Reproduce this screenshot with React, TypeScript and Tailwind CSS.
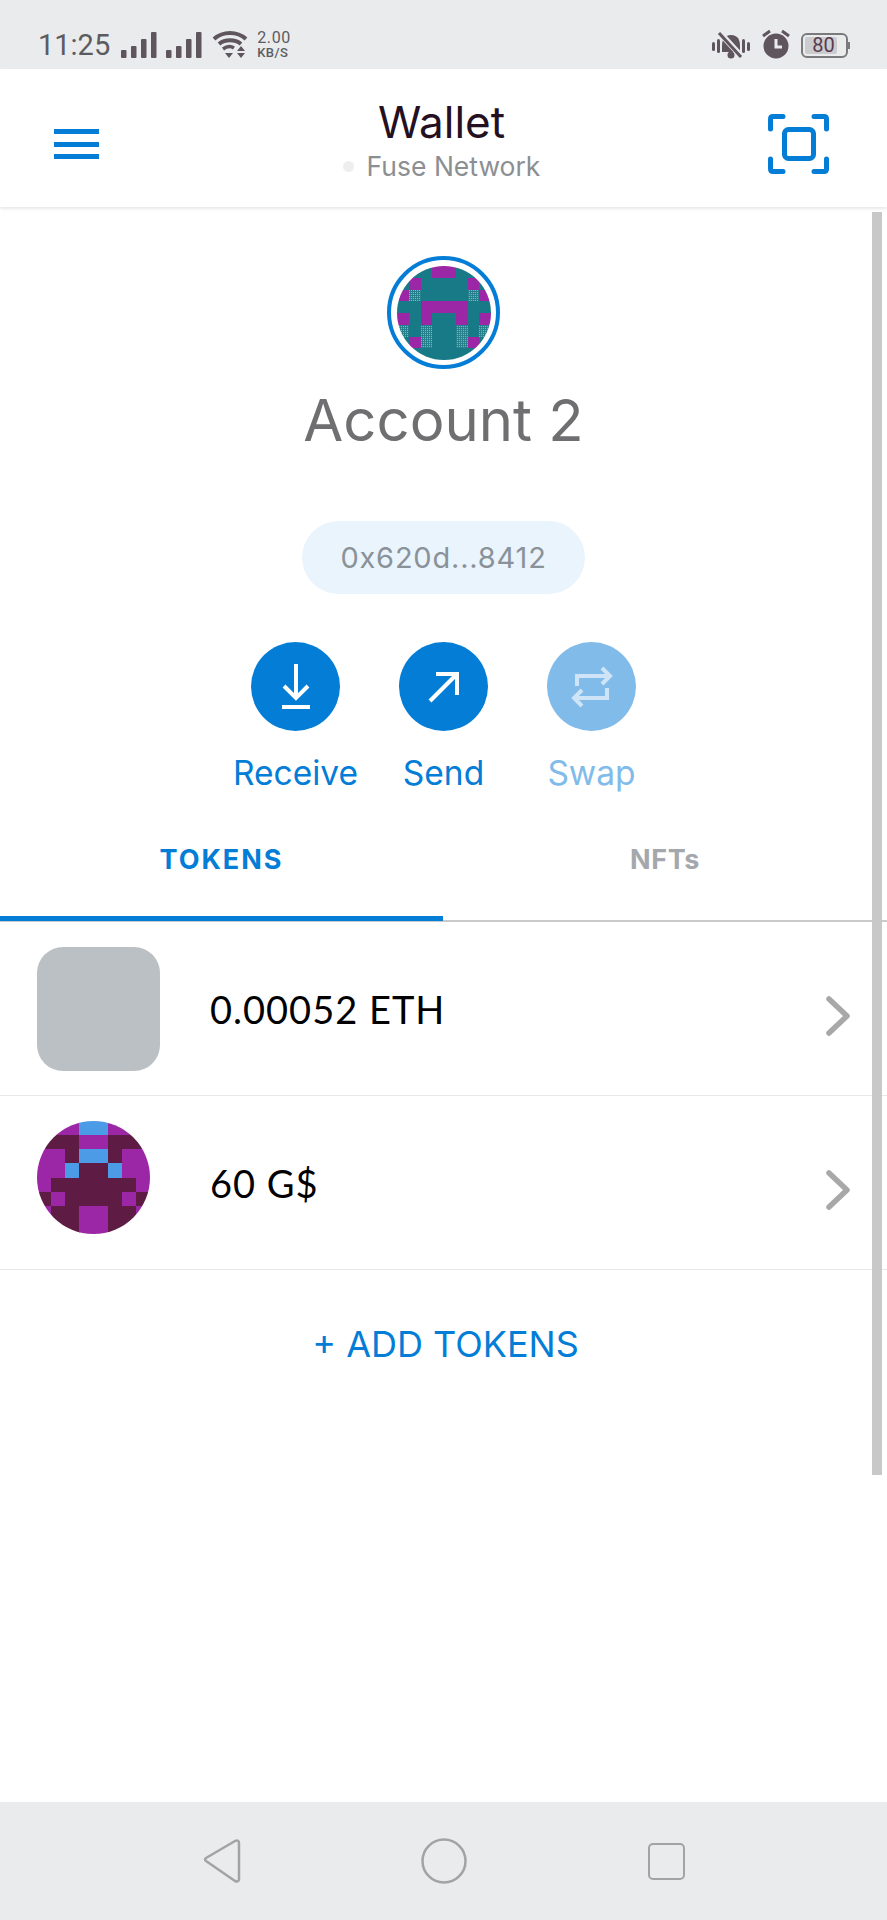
const P = "#9c27a6";
const T = "#177a86";
const M = "#5e1c44";
const B = "#4c9be6";

const accountGrid = [
  "TTTPPTTT",
  "TPTTTTPT",
  "PSTTTTSP",
  "TTPPPPTT",
  "PTPTTPTP",
  "STSTTSTS",
  "TPSTTSPT",
  "TTTTTTTT",
];

const tokenGrid = [
  "PPPBBPPP",
  "MMMPPMMM",
  "PPMBBMPP",
  "PPBMMBPP",
  "PMMMMMMP",
  "MPMMMMPM",
  "PMMPPMMP",
  "MMMPPMMM",
];

function Identicon({ grid, size, id }: { grid: string[]; size: number; id: string }) {
  const colors: Record<string, string> = { P, T, M, B, S: `url(#${id})` };
  return (
    <svg width={size} height={size} viewBox="0 0 8 8" className="block rounded-full" shapeRendering="crispEdges">
      <defs>
        <pattern id={id} width="0.17" height="0.17" patternUnits="userSpaceOnUse">
          <rect width="0.17" height="0.17" fill="#237f8b" />
          <rect width="0.085" height="0.085" fill="#86bcc3" />
        </pattern>
      </defs>
      {grid.map((row, y) =>
        row.split("").map((c, x) => <rect key={`${x}-${y}`} x={x} y={y} width="1.01" height="1.01" fill={colors[c]} />)
      )}
    </svg>
  );
}

function Signal() {
  return (
    <svg width="36" height="26" viewBox="0 0 36 26" fill="#5f555c" className="block">
      <rect x="0" y="18" width="5.5" height="8" rx="1" />
      <rect x="10" y="14" width="5.5" height="12" rx="1" />
      <rect x="20" y="7" width="5.5" height="19" rx="1" />
      <rect x="30" y="0" width="5.5" height="26" rx="1" />
    </svg>
  );
}

function Chevron() {
  return (
    <svg width="24" height="40" viewBox="0 0 24 40" fill="none" className="mt-[14px] block">
      <path d="M3 3 L21 20 L3 37" stroke="#a8a8a8" strokeWidth="5.5" strokeLinecap="round" strokeLinejoin="round" />
    </svg>
  );
}

function Action({ label, dim, children }: { label: string; dim?: boolean; children: React.ReactNode }) {
  return (
    <div className="flex w-[148px] flex-col items-center">
      <div className={`flex h-[89px] w-[89px] items-center justify-center rounded-full ${dim ? "bg-[#81bbea]" : "bg-[#037dd6]"}`}>
        {children}
      </div>
      <div className={`mt-[22px] text-[33.5px] leading-[40px] ${dim ? "text-[#81bbea]" : "text-[#037dd6]"}`}>{label}</div>
    </div>
  );
}

function TokenRow({ label, children }: { label: string; children: React.ReactNode }) {
  return (
    <div className="flex h-[174px] items-center border-b border-[#e6e8ea] pl-[37px] pr-[37px]">
      <div className="w-[173px] shrink-0">{children}</div>
      <div className="flex-1 pt-[2px] font-['Lato',sans-serif] text-[38px] tracking-[1px] text-black">{label}</div>
      <Chevron />
    </div>
  );
}

export default function App() {
  return (
    <div className="relative flex h-[1920px] w-[887px] flex-col overflow-hidden bg-white font-['Inter',sans-serif]">
      {/* status bar */}
      <div className="flex h-[69px] shrink-0 items-start justify-between bg-[#e9ebed] pl-[38px] pr-[37px] pt-[31px]">
        <div className="flex items-center">
          <span className="font-['Roboto',sans-serif] text-[29px] leading-[26px] text-[#5c5c60]">11:25</span>
          <div className="ml-[11px]"><Signal /></div>
          <div className="ml-[9px]"><Signal /></div>
          <svg width="36" height="27" viewBox="0 0 36 27" fill="none" stroke="#5f555c" className="ml-[10px] block">
            <path d="M2 8 C11 0 25 0 34 8" strokeWidth="4" />
            <path d="M7 13 C13 8 23 8 29 13" strokeWidth="4" />
            <path d="M11 18 C15 15 19 15 22 17" strokeWidth="3.5" />
            <path d="M13 22 H21 L17 27 Z" fill="#5f555c" stroke="none" />
            <path d="M25 20 H33 L29 15 Z M25 22 H33 L29 27 Z" fill="#5f555c" stroke="none" />
          </svg>
          <div className="ml-[9px] flex w-[34px] flex-col gap-[3px] font-['Roboto',sans-serif] text-[#5c5c60]">
            <span className="text-[16px] leading-[12px] tracking-[0.6px]">2.00</span>
            <span className="text-[13px] font-medium leading-[11px] tracking-[0.4px]">KB/S</span>
          </div>
        </div>
        <div className="flex items-center">
          <svg width="40" height="27" viewBox="0 0 40 27" fill="#5f555c" className="block">
            <path d="M20 3 C13 3 11 8 11 14 V20 H29 V14 C29 8 27 3 20 3 Z" />
            <circle cx="20" cy="23" r="3.5" />
            <rect x="1" y="10" width="3" height="9" rx="1.5" />
            <rect x="6" y="7" width="3" height="14" rx="1.5" />
            <rect x="31" y="7" width="3" height="14" rx="1.5" />
            <rect x="36" y="10" width="3" height="9" rx="1.5" />
            <path d="M9 1 L31 25" stroke="#e9ebed" strokeWidth="6" />
            <path d="M8 1 L30 25" stroke="#5f555c" strokeWidth="3" />
          </svg>
          <svg width="30" height="30" viewBox="0 0 30 30" fill="none" className="ml-[10px] -mt-[2px] block">
            <circle cx="15" cy="17" r="12.5" fill="#5f555c" />
            <path d="M15 10 V18 H21" stroke="#e9ebed" strokeWidth="3" />
            <path d="M2 7 L9 2 M28 7 L21 2" stroke="#5f555c" strokeWidth="3" />
          </svg>
          <div className="ml-[10px] flex h-[25px] items-center">
            <div className="flex h-[25px] w-[47px] items-center rounded-[6px] border-2 border-[#7a7a7c] p-[2px]">
              <div className="flex h-full w-[32px] items-center justify-center rounded-[2px] bg-[#cbcccd] pl-[5px] font-['Roboto',sans-serif] text-[20px] leading-none text-[#5a3a50]">
                80
              </div>
            </div>
            <div className="h-[7px] w-[2px] bg-[#7a7a7c]" />
          </div>
        </div>
      </div>

      {/* header */}
      <div className="z-10 flex h-[138px] shrink-0 items-start bg-white px-[54px] shadow-[0_2px_3px_rgba(0,0,0,0.09)]">
        <div className="flex flex-1 pt-[60px]">
          <div className="flex w-[45px] flex-col gap-[7.5px]">
            <div className="h-[5px] bg-[#037dd6]" />
            <div className="h-[5px] bg-[#037dd6]" />
            <div className="h-[5px] bg-[#037dd6]" />
          </div>
        </div>
        <div className="flex flex-col items-center pt-[28px]">
          <div className="text-[44px] leading-[50px] text-[#24101f]">Wallet</div>
          <div className="mt-[2px] flex items-center text-[#8c8f92]">
            <div className="mr-[13px] h-[11px] w-[11px] rounded-full bg-[#eeeeee]" />
            <span className="text-[26.5px] leading-[34px]">Fuse Network</span>
          </div>
        </div>
        <div className="flex flex-1 justify-end pr-[4px] pt-[45px]">
          <svg width="61" height="60" viewBox="0 0 61 60" fill="none" stroke="#037dd6" strokeWidth="5" className="block">
            <path d="M2.5 15 V5 Q2.5 2.5 5 2.5 H15" strokeLinecap="round" />
            <path d="M46 2.5 H56 Q58.5 2.5 58.5 5 V15" strokeLinecap="round" />
            <path d="M2.5 45 V55 Q2.5 57.5 5 57.5 H15" strokeLinecap="round" />
            <path d="M46 57.5 H56 Q58.5 57.5 58.5 55 V45" strokeLinecap="round" />
            <rect x="16.5" y="15.5" width="29" height="29" rx="4" />
          </svg>
        </div>
      </div>

      {/* content */}
      <div className="flex flex-1 flex-col">
        <div className="flex flex-col items-center pt-[49px]">
          <div className="flex h-[113px] w-[113px] items-center justify-center rounded-full border-[4px] border-[#037dd6]">
            <Identicon grid={accountGrid} size={94} id="speck" />
          </div>
          <div className="mt-[16px] text-[58px] leading-[70px] text-[#6f6f72]">Account 2</div>
          <div className="mt-[66px] flex h-[73px] w-[283px] items-center justify-center rounded-full bg-[#eaf4fd] text-[29px] tracking-[0.8px] text-[#8a9299]">
            0x620d...8412
          </div>
          <div className="mt-[48px] flex">
            <Action label="Receive">
              <svg width="30" height="46" viewBox="0 0 30 46" fill="none" stroke="#fff" strokeWidth="4">
                <path d="M15 0 V34" />
                <path d="M3 22 L15 34 L27 22" />
                <path d="M1 43 H29" />
              </svg>
            </Action>
            <Action label="Send">
              <svg width="32" height="32" viewBox="0 0 32 32" fill="none" stroke="#fff" strokeWidth="4">
                <path d="M2 30 L29 3" />
                <path d="M8 3 H29 V24" />
              </svg>
            </Action>
            <Action label="Swap" dim>
              <svg width="42" height="44" viewBox="0 0 42 44" fill="none" stroke="#cfe4f6" strokeWidth="4">
                <path d="M36 11 H6 V21" />
                <path d="M31 3 L39 11 L31 19" />
                <path d="M6 33 H36 V23" />
                <path d="M11 25 L3 33 L11 41" />
              </svg>
            </Action>
          </div>
        </div>

        {/* tabs */}
        <div className="mt-[22px] flex h-[107px] border-b-[2px] border-[#c8cacc] font-bold">
          <div className="-mb-[1px] flex w-[443px] items-start justify-center border-b-[5px] border-[#037dd6] pt-[28px] text-[27px] leading-[34px] tracking-[2px] text-[#037dd6]">
            TOKENS
          </div>
          <div className="flex flex-1 items-start justify-center pt-[28px] text-[27px] leading-[34px] tracking-[0.6px] text-[#a4a8ac]">
            NFTs
          </div>
        </div>

        <TokenRow label="0.00052 ETH">
          <div className="h-[124px] w-[123px] rounded-[26px] bg-[#bbc0c5]" />
        </TokenRow>
        <TokenRow label="60 G$">
          <div className="mb-[10px]">
            <Identicon grid={tokenGrid} size={113} id="speck2" />
          </div>
        </TokenRow>

        <div className="pl-[4px] pt-[52px] text-center text-[36px] leading-[44px] text-[#037dd6]">+ ADD TOKENS</div>
      </div>

      {/* nav bar */}
      <div className="flex h-[118px] shrink-0 items-center bg-[#eaebed] pl-[203px]">
        <svg width="38" height="44" viewBox="0 0 38 44" fill="none" stroke="#a2a3a5" strokeWidth="2.5" strokeLinejoin="round" className="block">
          <path d="M3 22 Q1 20.5 3 19 L32 2 Q36 0.5 36 4 V40 Q36 43.5 32 42 Z" />
        </svg>
        <svg width="46" height="46" viewBox="0 0 46 46" fill="none" stroke="#a2a3a5" strokeWidth="2.5" className="ml-[180px] block">
          <circle cx="23" cy="23" r="21.5" />
        </svg>
        <div className="ml-[181px] h-[37px] w-[37px] rounded-[5px] border-[2.5px] border-[#a2a3a5]" />
      </div>

      {/* scrollbar overlaying the content */}
      <div className="absolute left-[872px] top-[212px] h-[1263px] w-[10px] bg-[#c8c8c8]" />
    </div>
  );
}
